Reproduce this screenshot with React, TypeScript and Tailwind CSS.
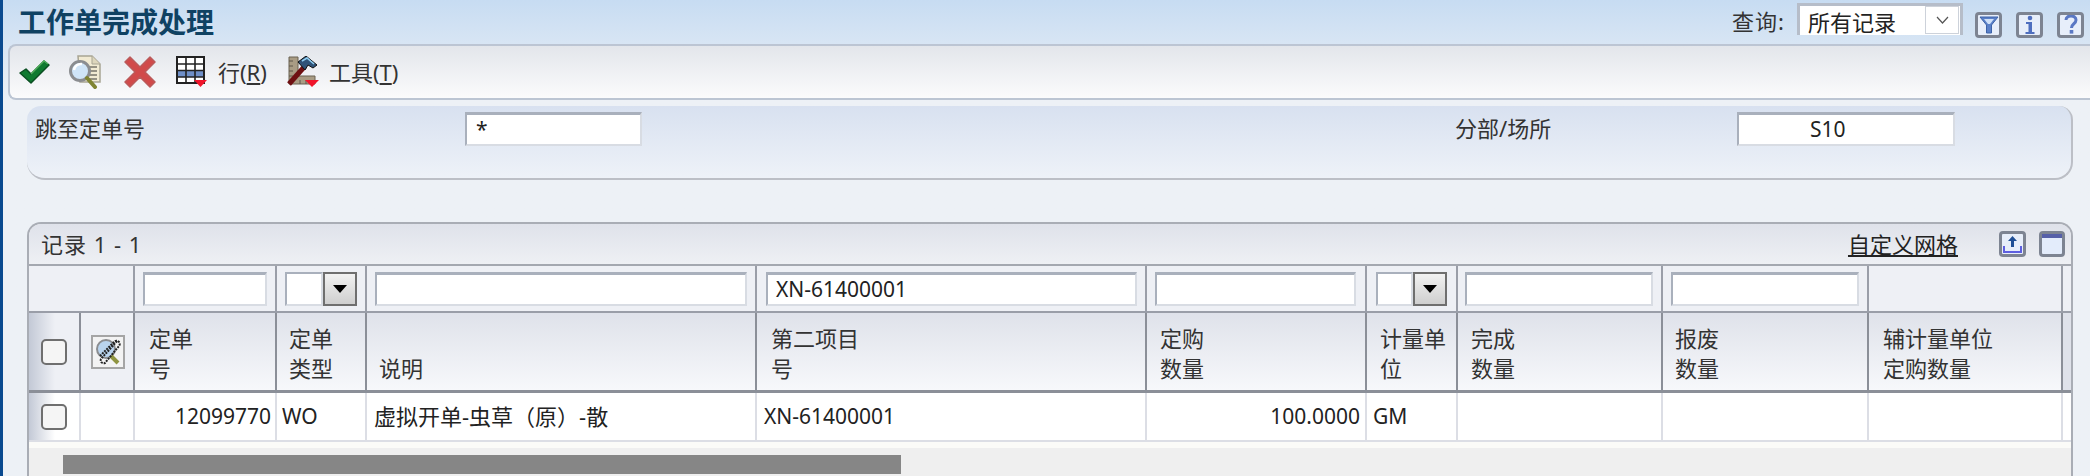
const cjk = "font-['Noto_Sans','Noto_Sans_CJK_SC',sans-serif]";
const gridCols = "grid grid-cols-[52px_54px_142px_90px_390px_390px_220px_91px_205px_206px_194px_10px]";

function CheckIcon() {
  return (
    <svg width="32" height="26" viewBox="0 0 32 26" className="ml-[8px] shrink-0">
      <path d="M2 14 L8 10 L13 15 L26 2 L31 6 L13 24 Z" fill="#0f7a30" stroke="#0b4f22" strokeWidth="1.5" strokeLinejoin="round" />
      <path d="M13 15 L26 2 L30 5" fill="none" stroke="#4fae5c" strokeWidth="1.5" />
    </svg>
  );
}

function FindIcon() {
  return (
    <svg width="34" height="34" viewBox="0 0 34 34" className="ml-[18px] shrink-0">
      <path d="M10 1 H24 L32 9 V27 H12 Z" fill="#f1ead2" stroke="#a8a594" strokeWidth="1.5" />
      <path d="M24 1 V9 H32" fill="#ddd6bc" stroke="#a8a594" />
      <path d="M20 12 H29 M21 16 H29 M21 20 H29 M20 24 H29" stroke="#77746a" strokeWidth="1.5" />
      <circle cx="12" cy="16" r="9.5" fill="#cfe4f7" stroke="#8b8d90" strokeWidth="3" />
      <path d="M6 15 A7 7 0 0 1 14 9" fill="none" stroke="#fff" strokeWidth="2.5" />
      <path d="M19 23 L27 32" stroke="#7f8432" strokeWidth="4" strokeLinecap="round" />
    </svg>
  );
}

function CancelIcon() {
  return (
    <svg width="32" height="32" viewBox="0 0 32 32" className="ml-[22px] shrink-0">
      <path d="M1 6 L6 1 L16 11 L26 1 L31 6 L21 16 L31 26 L26 31 L16 21 L6 31 L1 26 L11 16 Z" fill="#d14a4a" stroke="#bb5a5a" strokeWidth="1.5" strokeLinejoin="round" />
    </svg>
  );
}

function RowIcon() {
  return (
    <svg width="32" height="32" viewBox="0 0 32 32" className="ml-[20px] shrink-0">
      <rect x="1" y="1" width="27" height="26" fill="#fff" stroke="#222" strokeWidth="2" />
      <rect x="2" y="15" width="25" height="6" fill="#6f8fc8" />
      <path d="M1 8 H28 M1 14.5 H28 M1 21 H28 M10 1 V27 M19 1 V27" stroke="#222" strokeWidth="1.6" />
      <path d="M18 24 H31 L24.5 31 Z" fill="#f0142a" />
    </svg>
  );
}

function ToolsIcon() {
  return (
    <svg width="33" height="32" viewBox="0 0 33 32" className="ml-[19px] shrink-0">
      <path d="M3 1 H12 V20 H29 V28 H3 Z" fill="#a99c84" stroke="#6b6252" />
      <path d="M3 5 H7 M3 10 H7 M3 15 H7 M3 20 H7 M14 28 V24 M20 28 V24" stroke="#5f574a" />
      <path d="M3 28 L19 10" stroke="#6f1012" strokeWidth="5" />
      <path d="M12 6 L20 0 L31 9 L27 12 L22 9 L19 14 Z" fill="#2f5378" stroke="#111" />
      <path d="M16 5 L21 2 L28 8" fill="none" stroke="#8fcdf0" strokeWidth="1.6" />
      <path d="M19 24 H33 L26 31 Z" fill="#f0142a" />
    </svg>
  );
}

function FrameButton({ children }: { children: React.ReactNode }) {
  return (
    <div className="w-[27px] h-[26px] rounded-[4px] border-[3px] border-[#7d8492] bg-[#e7eefa] flex items-center justify-center shrink-0">
      {children}
    </div>
  );
}

function TextBox({ value, className }: { value?: string; className: string }) {
  return (
    <div className={`h-[34px] bg-white border-2 border-t-[3px] border-[#d8dce3] border-t-[#a9b0bc] border-l-[#a9b0bc] flex items-center text-[21px] text-[#222] ${className}`}>
      {value}
    </div>
  );
}

function SelectBox({ field, button }: { field: string; button: string }) {
  return (
    <div className="flex h-[34px] mt-[6px]">
      <div className={`h-full bg-white border-2 border-[#d8dce3] border-t-[#a9b0bc] border-l-[#a9b0bc] ${field}`} />
      <div className={`h-full border-2 border-[#6f6f6f] bg-gradient-to-b from-[#f2f2f2] to-[#cfcfcf] flex items-center justify-center ${button}`}>
        <svg width="14" height="8" viewBox="0 0 14 8"><path d="M0 0 H14 L7 8 Z" fill="#000" /></svg>
      </div>
    </div>
  );
}

function Head({ top, bottom, className = "" }: { top?: string; bottom: string; className?: string }) {
  return (
    <div className={`h-[80px] border-r-2 border-b-[3px] border-[#8b8f98] bg-gradient-to-b from-[#dfe2ea] to-[#f7f8fb] flex flex-col justify-end pb-[7px] pl-[12px] text-[22px] leading-[30px] text-[#333] ${className}`}>
      {top && <div>{top}</div>}
      <div>{bottom}</div>
    </div>
  );
}

function FilterCell({ children, className = "" }: { children?: React.ReactNode; className?: string }) {
  return (
    <div className={`h-[47px] border-r-2 border-b-2 border-[#9a9ea8] bg-[#eef0f5] ${className}`}>{children}</div>
  );
}

function DataCell({ children, className = "" }: { children?: React.ReactNode; className?: string }) {
  return (
    <div className={`h-[49px] border-r-2 border-b-2 border-[#dcdee5] bg-white flex items-center text-[21px] text-[#222] ${className}`}>{children}</div>
  );
}

function Box() {
  return <div className="w-[26px] h-[26px] rounded-[5px] border-2 border-[#6f6f6f] bg-[#f5f5f5]" />;
}

export default function App() {
  return (
    <div className={`w-[2090px] h-[476px] overflow-hidden flex bg-[#edf1f6] ${cjk}`}>
      <div className="w-[3px] bg-[#0a4a8f] shrink-0" />
      <div className="flex-1 flex flex-col min-w-0 bg-gradient-to-b from-[#c7dcf2] to-[#edf1f6] to-[21%]">
        <div className="h-[44px] flex items-center pl-[15px]">
          <h1 className="text-[28px] font-bold text-[#0f4263] leading-none">工作单完成处理</h1>
          <div className="ml-auto flex items-start self-start pt-[3px] pr-[6px]">
            <span className="text-[22px] leading-[36px] tracking-[1px] text-[#333]">查询:</span>
            <div className="ml-[12px] w-[166px] h-[32px] border-[3px] border-b-0 border-[#b6bdc9] bg-white flex justify-between overflow-hidden mr-[12px]">
              <span className="pl-[8px] text-[22px] leading-[33px] text-[#222]">所有记录</span>
              <div className="w-[34px] h-[28px] border border-[#cdd2da] flex items-center justify-center mr-[1px]">
                <svg width="13" height="8" viewBox="0 0 13 8"><path d="M1 1 L6.5 7 L12 1" fill="none" stroke="#555" strokeWidth="1.2" /></svg>
              </div>
            </div>
            <div className="flex gap-[14px] mt-[9px]">
              <FrameButton>
                <svg width="20" height="20" viewBox="0 0 20 20"><path d="M1 2 H19 L12.5 10 V18 H7.5 V10 Z" fill="#5a80c8" stroke="#3d62a8" /><path d="M5 4 H15 L11 9 H9 Z" fill="#cfe0f8" /></svg>
              </FrameButton>
              <FrameButton>
                <svg width="12" height="20" viewBox="0 0 12 20"><circle cx="6" cy="3" r="2.3" fill="#4f6fbf" /><path d="M2 7 H8 V17 H10.5 V19 H1.5 V17 H4.5 V9 H2 Z" fill="#4f6fbf" /></svg>
              </FrameButton>
              <FrameButton>
                <svg width="14" height="20" viewBox="0 0 14 20"><path d="M2 5 C2 -0.5 12 -0.5 12 5 C12 9 7.5 8.5 7.5 13" fill="none" stroke="#5a78c4" strokeWidth="3" /><rect x="5.7" y="15" width="3.6" height="3.6" fill="#5a78c4" /></svg>
              </FrameButton>
            </div>
          </div>
        </div>

        <div className="ml-[5px] h-[56px] border-2 border-r-0 border-[#bcc5d3] rounded-l-[8px] bg-gradient-to-b from-[#e3e6eb] to-[#fbfbfc] flex items-center">
          <CheckIcon />
          <FindIcon />
          <CancelIcon />
          <RowIcon />
          <span className="ml-[10px] text-[22px] text-[#333]">行(<u>R</u>)</span>
          <ToolsIcon />
          <span className="ml-[10px] text-[22px] text-[#333]">工具(<u>T</u>)</span>
        </div>

        <div className="ml-[24px] mr-[17px] mt-[6px] h-[74px] rounded-[18px] rounded-t-[14px] border-r-2 border-b-2 border-[#bcbfc6] bg-gradient-to-b from-[#d8e1f0] to-[#eef2f8] flex items-start pt-[6px] pl-[8px]">
          <span className="w-[430px] text-[22px] leading-[32px] text-[#333]">跳至定单号</span>
          <TextBox value="*" className="w-[177px] pl-[9px]" />
          <span className="ml-[813px] w-[282px] text-[22px] leading-[32px] text-[#333]">分部/场所</span>
          <TextBox value="S10" className="w-[218px] pl-[71px]" />
        </div>

        <div className="ml-[24px] mr-[17px] mt-[42px] flex-1 rounded-tl-[14px] rounded-tr-[14px] border-2 border-b-0 border-[#a9adb5] bg-[#efefef] overflow-hidden">
          <div className="h-[42px] border-b-2 border-[#a4a8b0] bg-gradient-to-b from-[#dfe2ea] to-[#eef0f4] flex items-center pl-[12px] pr-[6px]">
            <span className="text-[22px] tracking-[1px] text-[#333]">记录 1 - 1</span>
            <u className="ml-auto text-[22px] text-[#222]">自定义网格</u>
            <div className="ml-[41px] w-[27px] h-[26px] rounded-[4px] border-[3px] border-[#7d8492] bg-[#e7eefa] flex items-center justify-center">
              <svg width="19" height="18" viewBox="0 0 19 18"><path d="M9.5 1 L14 6 H11 V12 H8 V6 H5 Z" fill="#1f4f96" /><path d="M1 11 V17 H18 V11" fill="none" stroke="#5d5fe0" strokeWidth="2" /></svg>
            </div>
            <div className="ml-[13px] w-[26px] h-[26px] rounded-[4px] border-[3px] border-[#7d8492] bg-[#e3ecfb]">
              <div className="h-[4px] bg-[#5660a8]" />
            </div>
          </div>

          <div className={gridCols}>
            <FilterCell className="col-span-2" />
            <FilterCell className="pl-[8px] pt-[6px]"><TextBox className="w-[124px]" /></FilterCell>
            <FilterCell className="pl-[8px]"><SelectBox field="w-[38px]" button="w-[34px]" /></FilterCell>
            <FilterCell className="pl-[8px] pt-[6px]"><TextBox className="w-[372px]" /></FilterCell>
            <FilterCell className="pl-[9px] pt-[6px]"><TextBox value="XN-61400001" className="w-[371px] pl-[8px]" /></FilterCell>
            <FilterCell className="pl-[8px] pt-[6px]"><TextBox className="w-[201px]" /></FilterCell>
            <FilterCell className="pl-[9px]"><SelectBox field="w-[37px]" button="w-[34px]" /></FilterCell>
            <FilterCell className="pl-[7px] pt-[6px]"><TextBox className="w-[188px]" /></FilterCell>
            <FilterCell className="pl-[8px] pt-[6px]"><TextBox className="w-[188px]" /></FilterCell>
            <FilterCell />
            <FilterCell className="border-r-0" />

            <div className="h-[80px] border-r-2 border-b-[3px] border-[#8b8f98] bg-[linear-gradient(to_right,#c3c9d6,#eef0f5_26px)] flex items-center justify-center"><Box /></div>
            <div className="h-[80px] border-r-2 border-b-[3px] border-[#8b8f98] bg-[#eef0f5] flex items-center justify-center pl-[2px]">
              <div className="w-[34px] h-[34px] border-2 border-[#a5a5a5] bg-[#f3f3f3] flex items-center justify-center">
                <svg width="26" height="28" viewBox="0 0 26 28">
                  <circle cx="11" cy="11" r="9" fill="#b9d4ee" stroke="#8b8d90" strokeWidth="2" />
                  <path d="M16 18 L23 25" stroke="#8f9440" strokeWidth="4" />
                  <path d="M22 3 L6 21 A3 3 0 0 0 10 25 L24 8 A3 3 0 0 0 19 4 L5 18" fill="none" stroke="#222" strokeWidth="2" strokeDasharray="2 1" />
                </svg>
              </div>
            </div>
            <Head top="定单" bottom="号" className="pl-[14px]" />
            <Head top="定单" bottom="类型" />
            <Head bottom="说明" />
            <Head top="第二项目" bottom="号" className="pl-[14px]" />
            <Head top="定购" bottom="数量" className="pl-[13px]" />
            <Head top="计量单" bottom="位" className="pl-[13px]" />
            <Head top="完成" bottom="数量" className="pl-[13px]" />
            <Head top="报废" bottom="数量" />
            <Head top="辅计量单位" bottom="定购数量" className="pl-[14px]" />
            <div className="h-[80px] border-b-[3px] border-[#8b8f98] bg-[#dfe2ea]" />

            <DataCell className="bg-[linear-gradient(to_right,#c3c9d6,#ffffff_26px)] justify-center"><Box /></DataCell>
            <DataCell />
            <DataCell className="justify-end pr-[4px]">12099770</DataCell>
            <DataCell className="pl-[5px]">WO</DataCell>
            <DataCell className="pl-[7px] text-[22px]">虚拟开单-虫草（原）-散</DataCell>
            <DataCell className="pl-[7px]">XN-61400001</DataCell>
            <DataCell className="justify-end pr-[5px]">100.0000</DataCell>
            <DataCell className="pl-[6px]">GM</DataCell>
            <DataCell />
            <DataCell />
            <DataCell />
            <DataCell className="border-r-0" />
          </div>

          <div className="h-[6px] bg-[#fbfbf8]" />
          <div className="pl-[34px] pt-[7px]">
            <div className="w-[838px] h-[19px] bg-[#868686]" />
          </div>
        </div>
      </div>
    </div>
  );
}
